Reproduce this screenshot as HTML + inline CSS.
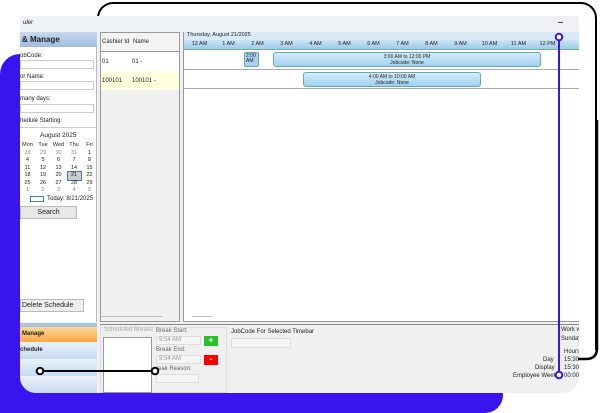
<!DOCTYPE html>
<html><head><style>
*{margin:0;padding:0;box-sizing:border-box}
body{width:600px;height:413px;background:#fff;position:relative;overflow:hidden;font-family:"Liberation Sans",sans-serif;font-size:6px;color:#222}
.a{position:absolute}
.t{font-size:6px;white-space:nowrap}
.r{display:flex;justify-content:space-between}
.r span{width:13px;text-align:center}
</style></head><body>
<div class="a" style="left:0;top:54px;width:503px;height:359px;background:#3a14ee;border-radius:20px 0 18px 0"></div>
<div class="a" style="left:97px;top:2px;width:500px;height:348px;border:2.5px solid #000;border-bottom:none;border-radius:16px 16px 0 0"></div>
<div class="a" style="left:20px;top:16px;width:559px;height:377px;background:#f0f0f0;border-radius:0 0 16px 16px;overflow:hidden">
 <div class="a" style="left:0;top:0;width:559px;height:15px;background:#eef2f7"></div>
 <div class="a t" style="left:3px;top:4px;font-style:italic">uler</div>
 <div class="a" style="left:538px;top:6px;width:5px;height:1px;background:#444"></div>
 <div class="a" style="left:0;top:16px;width:77px;height:290px;background:#fff;border-right:1px solid #bbb"></div>
 <div class="a" style="left:0;top:16px;width:77px;height:15px;background:linear-gradient(#c7d9ee,#9fbde0);font-weight:bold;font-size:8px;padding:3px 2px">&amp; Manage</div>
 <div class="a t" style="left:0;top:37px">obCode:</div>
 <div class="a" style="left:0;top:44px;width:74px;height:9px;border:1px solid #ccc;background:#fff"></div>
 <div class="a t" style="left:0;top:58px">or Name:</div>
 <div class="a" style="left:0;top:65px;width:74px;height:9px;border:1px solid #ccc"></div>
 <div class="a t" style="left:0;top:80px">many days:</div>
 <div class="a" style="left:0;top:88px;width:74px;height:9px;border:1px solid #ccc"></div>
 <div class="a t" style="left:0;top:102px">hedule Starting:</div>
 <div class="a" style="left:0;top:111px;width:77px;height:1px;background:#ccc"></div>
 <div class="a t" style="left:20px;top:116px;font-size:6.5px">August 2025</div>
 <div class="a" style="left:1px;top:126px;width:75px;font-size:5.5px;line-height:7.5px">
  <div class="r"><span>Mon</span><span>Tue</span><span>Wed</span><span>Thu</span><span>Fri</span></div>
  <div class="r" style="color:#888"><span>28</span><span>29</span><span>30</span><span>31</span><span style="color:#222">1</span></div>
  <div class="r"><span>4</span><span>5</span><span>6</span><span>7</span><span>8</span></div>
  <div class="r"><span>11</span><span>12</span><span>13</span><span>14</span><span>15</span></div>
  <div class="r"><span>18</span><span>19</span><span>20</span><span style="background:#ccc;outline:1px solid #3a7bd5">21</span><span>22</span></div>
  <div class="r"><span>25</span><span>26</span><span>27</span><span>28</span><span>29</span></div>
  <div class="r" style="color:#888"><span>1</span><span>2</span><span>3</span><span>4</span><span>5</span></div>
 </div>
 <div class="a" style="left:10px;top:180px;width:14px;height:6px;border:1px solid #3a7bd5"></div>
 <div class="a t" style="left:27px;top:180px">Today: 8/21/2025</div>
 <div class="a" style="left:0;top:190px;width:57px;height:13px;background:#e8e8e8;border:1px solid #bbb;text-align:center;font-size:7px;padding-top:2px">Search</div>
 <div class="a" style="left:0;top:283px;width:64px;height:13px;background:#eee;border:1px solid #bbb;font-size:7px;padding:2px 1px">Delete Schedule</div>
 <div class="a" style="left:0;top:307px;width:77px;height:4px;background:#a8c4e0"></div>
 <div class="a" style="left:0;top:311px;width:77px;height:15px;background:linear-gradient(#ffd89a,#f7a944);font-weight:bold;padding:4px 2px">Manage</div>
 <div class="a" style="left:0;top:326px;width:77px;height:17px;background:linear-gradient(#eaf2fb,#c6daf0);font-weight:bold;padding:5px 0">chedule</div>
 <div class="a" style="left:0;top:343px;width:77px;height:17px;background:linear-gradient(#eaf2fb,#c6daf0)"></div>
 <div class="a" style="left:0;top:360px;width:77px;height:17px;background:linear-gradient(#eaf2fb,#c6daf0)"></div>
 <div class="a" style="left:80px;top:16px;width:80px;height:290px;background:#f0f0f0;border:1px solid #999"></div>
 <div class="a" style="left:80px;top:16px;width:80px;height:20px;background:#f3f3f3;border:1px solid #999"></div>
 <div class="a t" style="left:82px;top:23px">Cashier Id</div><div class="a t" style="left:113px;top:23px">Name</div>
 <div class="a" style="left:81px;top:36px;width:78px;height:19px;background:#fff"></div>
 <div class="a t" style="left:82px;top:43px">01</div><div class="a t" style="left:112px;top:43px">01 -</div>
 <div class="a" style="left:81px;top:55px;width:78px;height:19px;background:#ffffe0"></div>
 <div class="a t" style="left:82px;top:62px">100101</div><div class="a t" style="left:112px;top:62px">100101 -</div>
 <div class="a" style="left:163px;top:16px;width:400px;height:290px;background:#fff;border:1px solid #999"></div>
 <div class="a" style="left:164px;top:16px;width:396px;height:8px;background:#dbeaf7"></div>
 <div class="a t" style="left:167px;top:16px;font-size:5.5px">Thursday, August 21/2025</div>
 <div class="a" style="left:164px;top:24px;width:396px;height:10px;background:linear-gradient(#cde4f5,#9ccbea);border-bottom:1px solid #7aa"></div>
 <div class="a" style="left:165px;top:25px;width:400px;font-size:5.5px;display:flex">
  <span style="width:29px;text-align:center">12 AM</span><span style="width:29px;text-align:center">1 AM</span><span style="width:29px;text-align:center">2 AM</span><span style="width:29px;text-align:center">3 AM</span><span style="width:29px;text-align:center">4 AM</span><span style="width:29px;text-align:center">5 AM</span><span style="width:29px;text-align:center">6 AM</span><span style="width:29px;text-align:center">7 AM</span><span style="width:29px;text-align:center">8 AM</span><span style="width:29px;text-align:center">9 AM</span><span style="width:29px;text-align:center">10 AM</span><span style="width:29px;text-align:center">11 AM</span><span style="width:29px;text-align:center">12 PM</span>
 </div>
 <div class="a" style="left:164px;top:53px;width:396px;height:1px;background:#aaa"></div>
 <div class="a" style="left:164px;top:72px;width:396px;height:1px;background:#aaa"></div>
 <div class="a" style="left:224px;top:36px;width:15px;height:15px;background:#a9d3ef;border:1px solid #6aa;border-radius:2px;font-size:5px;line-height:5px;padding:1px">2:00 AM</div>
 <div class="a" style="left:253px;top:36px;width:268px;height:15px;background:linear-gradient(#d5ecfa,#9fd0ef);border:1px solid #6aa;border-radius:3px;font-size:5px;text-align:center;line-height:6px;padding-top:1px">3:00 AM to 12:00 PM<br>Jobcode: None</div>
 <div class="a" style="left:283px;top:56px;width:178px;height:15px;background:linear-gradient(#d5ecfa,#9fd0ef);border:1px solid #6aa;border-radius:3px;font-size:5px;text-align:center;line-height:6px;padding-top:1px">4:00 AM to 10:00 AM<br>Jobcode: None</div>
 <div class="a" style="left:82px;top:300px;width:60px;height:1px;background:#bbb"></div>
 <div class="a" style="left:172px;top:300px;width:20px;height:1px;background:#bbb"></div>
 <div class="a" style="left:80px;top:308px;width:480px;height:1px;background:#888"></div>
 <div class="a" style="left:80px;top:311px;width:127px;height:66px;border:1px solid #ddd"></div>
 <div class="a t" style="left:84px;top:311px;color:#aaa">Scheduled Breaks</div>
 <div class="a" style="left:83px;top:321px;width:49px;height:56px;background:#fff;border:1px solid #999"></div>
 <div class="a t" style="left:136px;top:312px;color:#666">Break Start:</div>
 <div class="a" style="left:136px;top:320px;width:45px;height:9px;background:#f5f5f5;border:1px solid #ddd;color:#999;padding-left:2px">9:54 AM</div>
 <div class="a" style="left:184px;top:320px;width:14px;height:10px;background:#22c322;color:#fff;font-weight:bold;font-size:9px;text-align:center;line-height:9px">+</div>
 <div class="a t" style="left:136px;top:331px;color:#666">Break End:</div>
 <div class="a" style="left:136px;top:339px;width:45px;height:9px;background:#f5f5f5;border:1px solid #ddd;color:#999;padding-left:2px">9:54 AM</div>
 <div class="a" style="left:184px;top:339px;width:14px;height:10px;background:#f00;color:#fff;font-weight:bold;font-size:9px;text-align:center;line-height:9px">-</div>
 <div class="a t" style="left:136px;top:350px;color:#666">reak Reason:</div>
 <div class="a" style="left:136px;top:358px;width:43px;height:9px;background:#f5f5f5;border:1px solid #ddd"></div>
 <div class="a t" style="left:211px;top:313px;font-size:6px">JobCode For Selected Timebar</div>
 <div class="a" style="left:211px;top:322px;width:60px;height:10px;background:#f5f5f5;border:1px solid #ddd"></div>
 <div class="a t" style="left:541px;top:311px">Work w</div>
 <div class="a t" style="left:541px;top:320px">Sunday</div>
 <div class="a t" style="left:544px;top:333px">Hours</div>
 <div class="a t" style="left:523px;top:341px">Day</div><div class="a t" style="left:544px;top:341px">15:30</div>
 <div class="a t" style="left:515px;top:349px">Display</div><div class="a t" style="left:544px;top:349px">15:30</div>
 <div class="a t" style="left:493px;top:357px">Employee Week</div><div class="a t" style="left:544px;top:357px">00:00</div>
</div>
<svg class="a" style="left:0;top:0" width="600" height="413">
 <path d="M597 120 V348 Q597 359 586 359 H578" fill="none" stroke="#000" stroke-width="2.5"/>
 <line x1="559" y1="37" x2="559" y2="375" stroke="#3a14ee" stroke-width="2"/>
 <circle cx="559" cy="37" r="3.3" fill="#fff" stroke="#3a14ee" stroke-width="2"/>
 <circle cx="559" cy="375" r="3.3" fill="#fff" stroke="#3a14ee" stroke-width="2"/>
 <line x1="40" y1="371" x2="155" y2="371" stroke="#000" stroke-width="2"/>
 <circle cx="40" cy="371" r="3.3" fill="#fff" stroke="#000" stroke-width="2"/>
 <circle cx="155" cy="371" r="3.3" fill="#fff" stroke="#000" stroke-width="2"/>
</svg>
</body></html>
